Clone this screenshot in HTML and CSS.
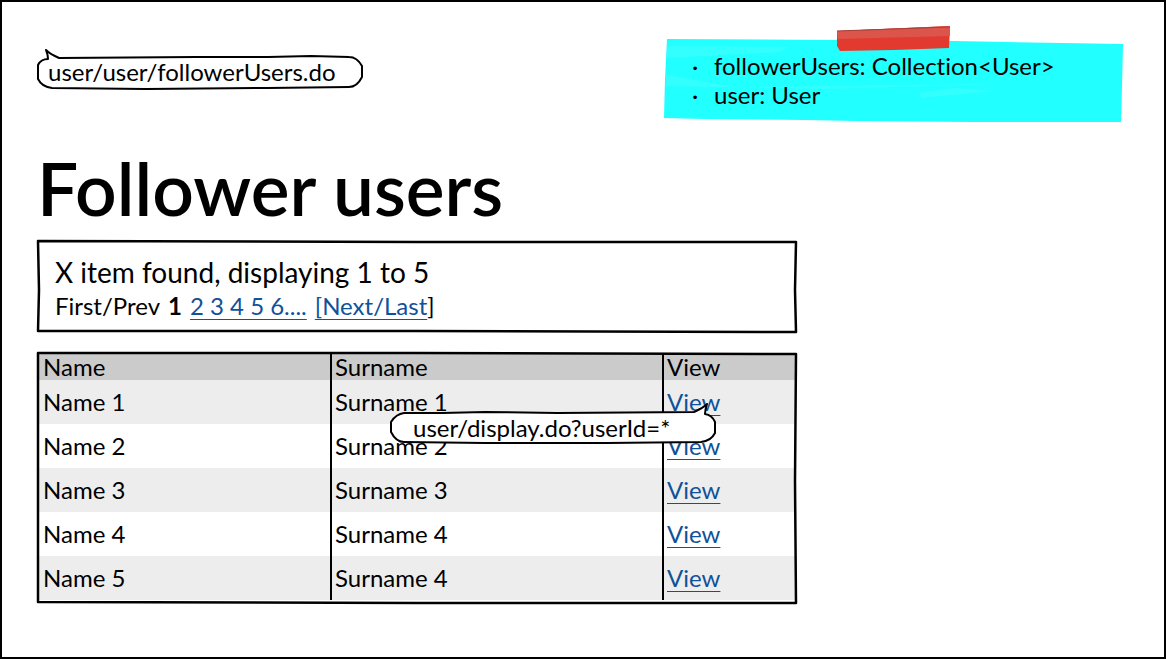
FILE: index.html
```html
<!DOCTYPE html>
<html lang="en">
<head>
<meta charset="utf-8">
<title>Follower users</title>
<link rel="stylesheet" href="styles.css">
</head>
<body>
<div class="page">
  <header class="top">
    <div class="bubble">
      <svg class="sketch" viewBox="0 0 328 42" preserveAspectRatio="none" aria-hidden="true"><path d="M23 10 L160 9 L232 9 L275 8 L313 9 Q321 9 326 18 L326 29 Q321 39 313 39 L232 40 L110 41 L16 40 Q6 39 2 31 L2 17 Q5 11 12 11 Q12 7 10 2 Q14 6 23 10 Z"/></svg>
      <span class="bubble-text">user/user/followerUsers.do</span>
    </div>
    <aside class="note">
      <svg class="paper" viewBox="0 0 460 98" preserveAspectRatio="none" aria-hidden="true">
        <path fill="#22ffff" d="M3 13 L170 14 L236 14 L342 16 L459 18 L458 61 L457 96 L370 96 L308 96 L192 95 L142 94 L40 93 L0 92 L1 53 Z"/>
        <path fill="#34ffff" d="M3 20 L125 21 L115 26 L3 32 Z M2 49 L70 61 L340 58 L160 63 L2 60 Z M255 67 L290 62 L330 65 L275 70 L258 72 Z"/>
        <path fill="#e23a2f" d="M173 5 L286 0 L285 22 L230 24 L176 25 L173 20 Z"/>
        <path fill="#dc554b" d="M173 5 L286 0 L286 10 L174 13 Z"/>
        <path fill="none" stroke="#a63e39" stroke-width="1" d="M173 5 L286 1"/>
      </svg>
      <ul class="note-list">
        <li>followerUsers: Collection&lt;User&gt;</li>
        <li>user: User</li>
      </ul>
    </aside>
  </header>
  <main class="content">
    <h1 class="title">Follower users</h1>
    <section class="panel">
      <svg class="sketch line" viewBox="0 0 760 92" preserveAspectRatio="none" aria-hidden="true"><path d="M1 1 L380 2 L759 2 L758 50 L759 92 L380 91 L1 91 L2 50 Z"/></svg>
      <p class="summary">X item found, displaying 1 to 5</p>
      <nav class="pager"><span>First/Prev</span> <b>1</b> <a class="link" href="#">2 3 4 5 6....</a> <span class="next"><a class="link" href="#">[Next/Last</a>]</span></nav>
    </section>
    <div class="grid">
      <table class="users">
        <thead><tr><th class="name">Name</th><th class="surname">Surname</th><th>View</th></tr></thead>
        <tbody>
          <tr><td>Name 1</td><td>Surname 1</td><td><a class="link" href="#">View</a></td></tr>
          <tr><td>Name 2</td><td>Surname 2</td><td><a class="link" href="#">View</a></td></tr>
          <tr><td>Name 3</td><td>Surname 3</td><td><a class="link" href="#">View</a></td></tr>
          <tr><td>Name 4</td><td>Surname 4</td><td><a class="link" href="#">View</a></td></tr>
          <tr><td>Name 5</td><td>Surname 4</td><td><a class="link" href="#">View</a></td></tr>
        </tbody>
      </table>
      <svg class="sketch line" viewBox="0 0 760 254" preserveAspectRatio="none" aria-hidden="true"><path d="M1 1 L380 1 L759 2 L758 130 L759 253 L380 253 L1 252 L1 120 Z"/></svg>
      <div class="bubble callout">
        <svg class="sketch" viewBox="0 0 328 42" preserveAspectRatio="none" aria-hidden="true"><path d="M305 10 L168 11 L96 10 L53 11 L15 11 Q7 12 2 20 L2 30 Q7 40 15 40 L96 41 L218 41 L312 40 Q322 39 326 31 L326 20 Q323 13 316 12 Q316 8 318 2 Q314 6 305 10 Z"/></svg>
        <span class="bubble-text">user/display.do?userId=*</span>
      </div>
    </div>
  </main>
</div>
</body>
</html>
```
FILE: styles.css
```css
* { box-sizing: border-box; }
body {
  margin: 0;
  background: #fff;
  color: #000;
  font-family: Lato, sans-serif;
  font-size: 24px;
  line-height: 28px;
  font-variant-ligatures: none;
}
.page {
  min-height: 100vh;
  border: 2px solid #000;
  padding: 24px 40px 24px 34px;
}
.top {
  display: flex;
  justify-content: space-between;
  align-items: flex-start;
}
.bubble {
  position: relative;
  width: 328px;
  padding: 10px 12px 4px;
  margin-top: 22px;
}
.sketch {
  position: absolute;
  inset: 0;
  width: 100%;
  height: 100%;
  fill: #fff;
  stroke: #000;
  stroke-width: 2;
  stroke-linejoin: round;
}
.line {
  fill: none;
  overflow: visible;
  pointer-events: none;
}
.line path { stroke-width: 2.5; }
.bubble-text {
  position: relative;
  display: block;
  white-space: nowrap;
}
.note {
  position: relative;
  width: 460px;
  padding: 25px 16px 15px 28px;
}
.paper {
  position: absolute;
  inset: 0;
  width: 100%;
  height: 100%;
}
.note-list {
  position: relative;
  margin: 0;
  padding: 0;
  list-style: none;
  line-height: 29px;
}
.note-list li {
  display: flex;
  white-space: nowrap;
}
.note-list li::before {
  content: "·";
  width: 22px;
}
.content { max-width: 761px; padding-left: 1px; }
.title {
  margin: 24px 0 12px;
  font-size: 73px;
  line-height: 80px;
  font-weight: 600;
}
.panel {
  position: relative;
  padding: 18px 18px 12px;
  margin-bottom: 20px;
}
.summary { margin: 0 0 6px; font-size: 28px; }
.pager { display: flex; flex-wrap: wrap; gap: 0 8px; }
.link {
  color: #0f5299;
  text-decoration: underline;
  text-decoration-thickness: 1px;
  text-underline-offset: 4px;
}
.grid { position: relative; padding: 2px 2px 4px; }
.users {
  width: 100%;
  table-layout: fixed;
  border-collapse: collapse;
}
.users th, .users td {
  height: 44px;
  padding: 0 3px;
  text-align: left;
  font-weight: 400;
  border-left: 2px solid #000;
}
.users th { height: 26px; line-height: 26px; background: #cbcbcb; }
.users th:first-child, .users td:first-child { border-left: 0; padding-left: 4px; }
.users tbody tr:nth-child(odd) { background: #ededed; }
.name { width: 292px; }
.surname { width: 332px; }
.callout {
  position: absolute;
  top: 50px;
  right: 80px;
  margin: 0;
  padding: 12px 0 2px 24px;
}
```
